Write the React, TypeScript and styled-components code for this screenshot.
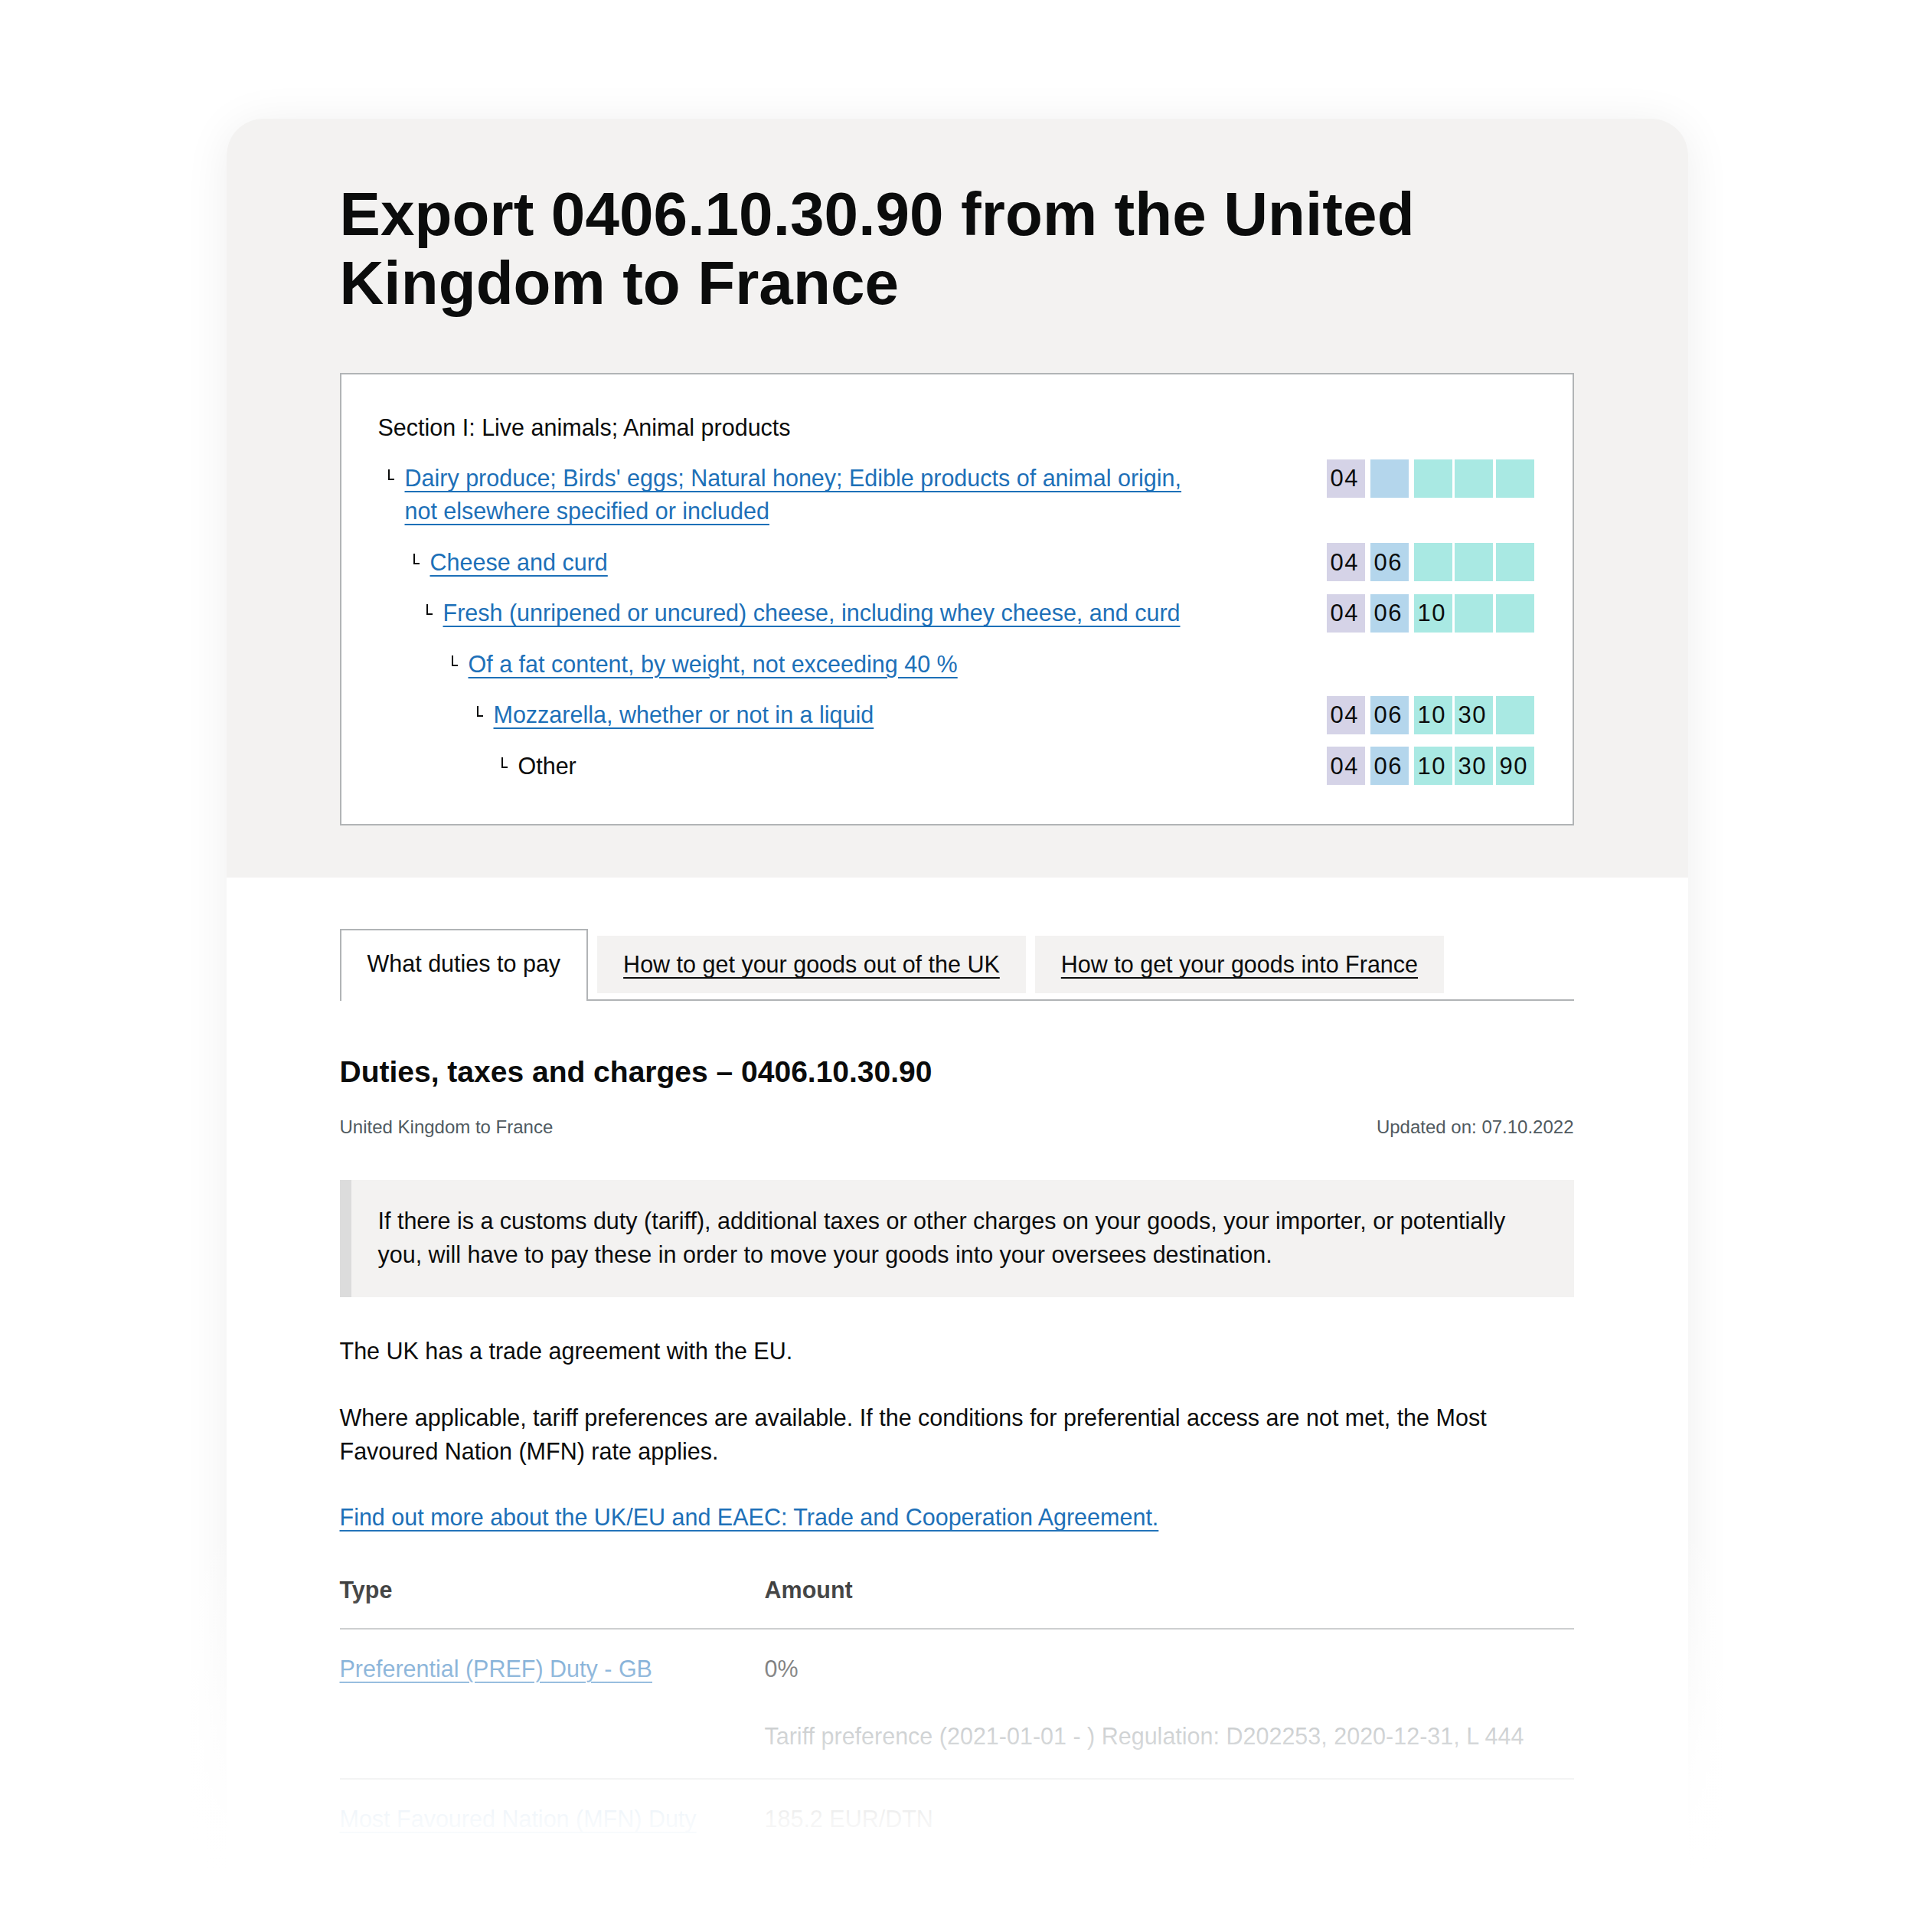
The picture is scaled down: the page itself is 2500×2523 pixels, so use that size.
import React from 'react';
import styled, {createGlobalStyle} from 'styled-components';

type CommodityRow = {
    text: string
    link: boolean
    indent: number
    codes: string[] | null
}

const rows: CommodityRow[] = [
    {text: "Dairy produce; Birds' eggs; Natural honey; Edible products of animal origin, not elsewhere specified or included", link: true, indent: 35, codes: ['04', '', '', '', '']},
    {text: 'Cheese and curd', link: true, indent: 68, codes: ['04', '06', '', '', '']},
    {text: 'Fresh (unripened or uncured) cheese, including whey cheese, and curd', link: true, indent: 85, codes: ['04', '06', '10', '', '']},
    {text: 'Of a fat content, by weight, not exceeding 40 %', link: true, indent: 118, codes: null},
    {text: 'Mozzarella, whether or not in a liquid', link: true, indent: 151, codes: ['04', '06', '10', '30', '']},
    {text: 'Other', link: false, indent: 183, codes: ['04', '06', '10', '30', '90']},
]

// colour per digit pair: chapter, heading, then the rest
const codeColours = ['#d5d3e7', '#b4d6ec', '#a9e9e3', '#a9e9e3', '#a9e9e3']
const codeGaps = [0, 7, 7, 3, 4]

const tabs = ['What duties to pay', 'How to get your goods out of the UK', 'How to get your goods into France']

function App() {
    return (
        <Page>
            <GlobalStyle/>
            <Card>
                <Hero>
                    <Title>Export 0406.10.30.90 from the United Kingdom to France</Title>
                    <ClassBox>
                        <SectionLabel>Section I: Live animals; Animal products</SectionLabel>
                        {rows.map((row) => (
                            <Row key={row.text}>
                                <Desc $indent={row.indent}>
                                    <Branch/>
                                    <DescText>
                                        {row.link ? <Link href="#">{row.text}</Link> : row.text}
                                    </DescText>
                                </Desc>
                                {row.codes ? (
                                    <Codes>
                                        {row.codes.map((c, i) => (
                                            <CodeBox key={i} $bg={codeColours[i]} $gap={codeGaps[i]}>{c}</CodeBox>
                                        ))}
                                    </Codes>
                                ) : ''}
                            </Row>
                        ))}
                    </ClassBox>
                </Hero>
                <Content>
                    <TabList>
                        {tabs.map((t, i) => (
                            <Tab key={t} $selected={i === 0}>
                                {i === 0 ? t : <TabLink href="#">{t}</TabLink>}
                            </Tab>
                        ))}
                    </TabList>
                    <SubHeading>Duties, taxes and charges – 0406.10.30.90</SubHeading>
                    <Meta>
                        <span>United Kingdom to France</span>
                        <span>Updated on: 07.10.2022</span>
                    </Meta>
                    <Inset>
                        If there is a customs duty (tariff), additional taxes or other charges on your goods, your
                        importer, or potentially you, will have to pay these in order to move your goods into your
                        oversees destination.
                    </Inset>
                    <Para $top={49}>The UK has a trade agreement with the EU.</Para>
                    <Para $top={43.5}>
                        Where applicable, tariff preferences are available. If the conditions for preferential access
                        are not met, the Most Favoured Nation (MFN) rate applies.
                    </Para>
                    <Para $top={43}>
                        <Link href="#">Find out more about the UK/EU and EAEC: Trade and Cooperation Agreement.</Link>
                    </Para>
                    <DutyTable>
                        <thead>
                        <tr>
                            <Th $first>Type</Th>
                            <Th>Amount</Th>
                        </tr>
                        </thead>
                        <tbody>
                        <tr>
                            <Td><Link href="#">Preferential (PREF) Duty - GB</Link></Td>
                            <Td>
                                <div>0%</div>
                                <Note>Tariff preference (2021-01-01 - ) Regulation: D202253, 2020-12-31, L 444</Note>
                            </Td>
                        </tr>
                        <tr>
                            <Td><Link href="#">Most Favoured Nation (MFN) Duty</Link></Td>
                            <Td>
                                <div>185.2 EUR/DTN</div>
                                <Note>Third country duty (2016)</Note>
                            </Td>
                        </tr>
                        </tbody>
                    </DutyTable>
                </Content>
            </Card>
            <Fade/>
        </Page>
    );
}

export default App;

const GlobalStyle = createGlobalStyle`
  html, body {
    margin: 0;
    padding: 0;
    background: #ffffff;
  }
  body {
    font-family: "Liberation Sans", Arial, sans-serif;
    color: #0b0c0c;
  }
  * {
    box-sizing: border-box;
  }
`

const Page = styled.div`
  position: relative;
  width: 2500px;
  height: 2523px;
  overflow: hidden;
  padding-top: 155px;
  background: #ffffff;
`

const Card = styled.main`
  width: 1909px;
  margin: 0 auto;
  border-radius: 48px;
  background: #ffffff;
  box-shadow: 0 6px 60px rgba(0, 0, 0, 0.07);
  overflow: hidden;
`

const Hero = styled.header`
  background: #f3f2f1;
  padding: 80px 149px 68px 148px;
`

const Title = styled.h1`
  margin: 0;
  font-size: 80px;
  line-height: 90px;
  font-weight: 700;
  letter-spacing: 0.1px;
  color: #0b0c0c;
`

const ClassBox = styled.div`
  margin-top: 72px;
  border: 2px solid #b1b4b6;
  background: #ffffff;
  padding: 47.5px 50px 54.5px 48px;
  display: flex;
  flex-direction: column;
  gap: 23.5px;
`

const SectionLabel = styled.div`
  font-size: 30.5px;
  line-height: 43px;
`

const Row = styled.div`
  display: flex;
  align-items: flex-start;
  justify-content: space-between;
`

const Desc = styled.div<{ $indent: number }>`
  display: flex;
  align-items: flex-start;
  max-width: 1076px;
  padding-left: ${p => p.$indent - 22}px;
`

const Branch = styled.span`
  flex: none;
  width: 8px;
  height: 14px;
  margin: 10px 14px 0 0;
  border-left: 2px solid #0b0c0c;
  border-bottom: 2px solid #0b0c0c;
`

const DescText = styled.div`
  font-size: 30.5px;
  line-height: 43px;
`

const Link = styled.a`
  color: #1d70b8;
  text-decoration: underline;
  text-decoration-thickness: 2px;
  text-underline-offset: 6px;
`

const Codes = styled.div`
  flex: none;
  display: flex;
  align-items: center;
  height: 43px;
`

const CodeBox = styled.div<{ $bg: string, $gap: number }>`
  flex: none;
  display: flex;
  align-items: center;
  width: 50px;
  height: 50px;
  margin-left: ${p => p.$gap}px;
  padding-left: 5px;
  background: ${p => p.$bg};
  font-size: 31px;
  letter-spacing: 1.5px;
  line-height: 1;
  color: #0b0c0c;
`

const Content = styled.section`
  padding: 67px 149px 0 148px;
`

const TabList = styled.ul`
  list-style: none;
  margin: 0;
  padding: 0;
  display: flex;
  align-items: flex-end;
  gap: 12px;
  border-bottom: 2px solid #b1b4b6;
`

const Tab = styled.li<{ $selected: boolean }>`
  display: flex;
  align-items: center;
  padding: 0 34px ${p => p.$selected ? '6px' : '0'};
  height: ${p => p.$selected ? '94px' : '75px'};
  margin-bottom: ${p => p.$selected ? '-2px' : '8px'};
  background: ${p => p.$selected ? '#ffffff' : '#f3f2f1'};
  border: ${p => p.$selected ? '2px solid #b1b4b6' : 'none'};
  border-bottom: none;
  font-size: 30.5px;
  line-height: 43px;
`

const TabLink = styled.a`
  color: #0b0c0c;
  text-decoration: underline;
  text-decoration-thickness: 2px;
  text-underline-offset: 6px;
`

const SubHeading = styled.h2`
  margin: 68px 0 0;
  font-size: 39px;
  line-height: 50px;
  font-weight: 700;
`

const Meta = styled.div`
  display: flex;
  justify-content: space-between;
  margin-top: 30px;
  font-size: 24px;
  line-height: 34px;
  color: #505a5f;
`

const Inset = styled.div`
  margin-top: 52px;
  border-left: 15px solid #dcdcdc;
  background: #f3f2f1;
  padding: 31px 50px 34px 35px;
  font-size: 30.5px;
  line-height: 44px;
`

const Para = styled.p<{ $top: number }>`
  margin: ${p => p.$top}px 0 0;
  font-size: 30.5px;
  line-height: 43.5px;
`

const DutyTable = styled.table`
  margin-top: 51px;
  width: 100%;
  border-collapse: collapse;
  font-size: 30.5px;
  line-height: 43.5px;
`

const Th = styled.th<{ $first?: boolean }>`
  width: ${p => p.$first ? '555px' : 'auto'};
  text-align: left;
  font-weight: 700;
  padding: 0 0 27.5px;
  border-bottom: 2px solid #b1b4b6;
`

const Td = styled.td`
  vertical-align: top;
  padding: 30px 0 33px;
  border-bottom: 2px solid #b1b4b6;
`

const Note = styled.div`
  margin-top: 44.5px;
  color: #505a5f;
`

const Fade = styled.div`
  position: absolute;
  left: 0;
  right: 0;
  top: 1990px;
  bottom: 0;
  pointer-events: none;
  background: linear-gradient(
    to bottom,
    rgba(255, 255, 255, 0) 0%,
    rgba(255, 255, 255, 0.23) 16%,
    rgba(255, 255, 255, 0.5) 36%,
    rgba(255, 255, 255, 0.74) 52%,
    rgba(255, 255, 255, 0.96) 73%,
    rgba(255, 255, 255, 1) 85%
  );
`
